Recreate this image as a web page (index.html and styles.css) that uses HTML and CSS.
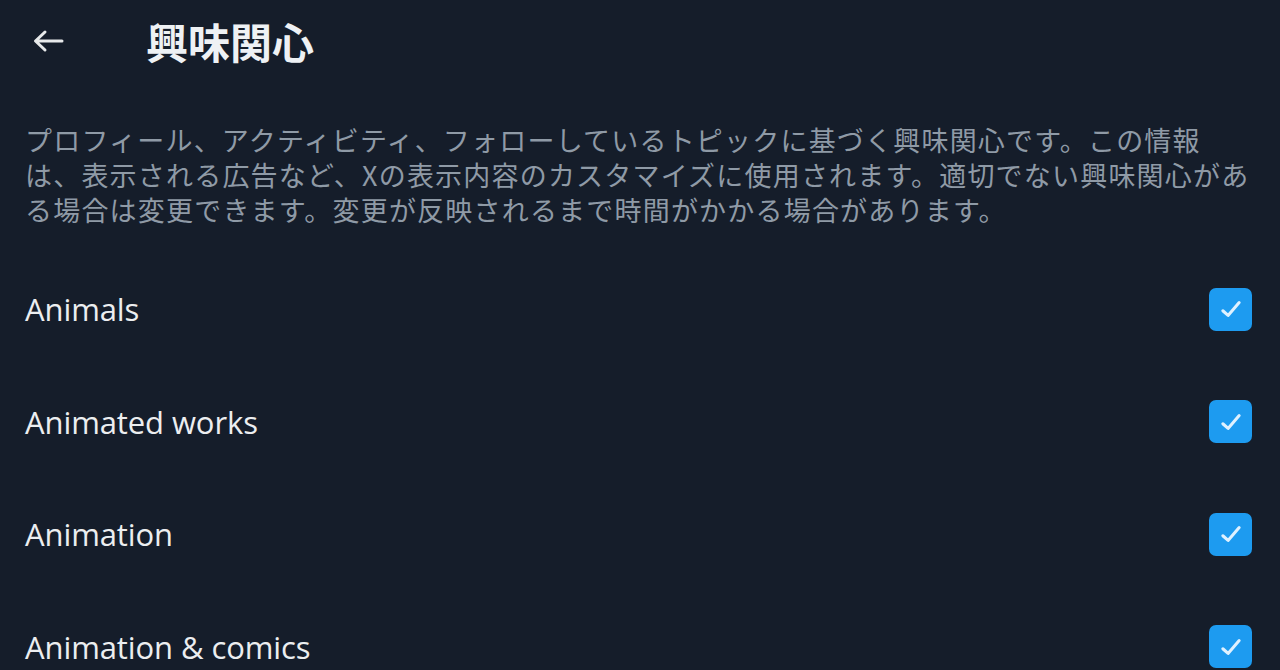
FILE: index.html
```html
<!DOCTYPE html>
<html lang="ja">
<head>
<meta charset="utf-8">
<title>興味関心</title>
<link rel="stylesheet" href="styles.css">
</head>
<body>
<div class="page">
  <header class="header">
    <button class="back" aria-label="戻る">
      <svg viewBox="0 0 32 24" width="32" height="24"><path d="M30 12H4M13 3L3.5 12L13 21" fill="none" stroke="#e7e9ea" stroke-width="3" stroke-linecap="round" stroke-linejoin="round"/></svg>
    </button>
    <h1 class="title">興味関心</h1>
  </header>
  <p class="desc"><span class="line">プロフィール、アクティビティ、フォローしているトピックに基づく興味関心です。この情報</span><span class="line">は、表示される広告など、Xの表示内容のカスタマイズに使用されます。適切でない興味関心があ</span><span class="line">る場合は変更できます。変更が反映されるまで時間がかかる場合があります。</span></p>
  <ul class="list">
    <li class="row"><span class="label">Animals</span><span class="check"><svg viewBox="0 0 24 24" width="28" height="28"><path d="M5 13.5l4.5 4L19 6.5" fill="none" stroke="#dff1ff" stroke-width="2.6" stroke-linecap="round" stroke-linejoin="round"/></svg></span></li>
    <li class="row"><span class="label">Animated works</span><span class="check"><svg viewBox="0 0 24 24" width="28" height="28"><path d="M5 13.5l4.5 4L19 6.5" fill="none" stroke="#dff1ff" stroke-width="2.6" stroke-linecap="round" stroke-linejoin="round"/></svg></span></li>
    <li class="row"><span class="label">Animation</span><span class="check"><svg viewBox="0 0 24 24" width="28" height="28"><path d="M5 13.5l4.5 4L19 6.5" fill="none" stroke="#dff1ff" stroke-width="2.6" stroke-linecap="round" stroke-linejoin="round"/></svg></span></li>
    <li class="row"><span class="label">Animation &amp; comics</span><span class="check"><svg viewBox="0 0 24 24" width="28" height="28"><path d="M5 13.5l4.5 4L19 6.5" fill="none" stroke="#dff1ff" stroke-width="2.6" stroke-linecap="round" stroke-linejoin="round"/></svg></span></li>
  </ul>
</div>
</body>
</html>
```

FILE: styles.css
```css
html, body {
  margin: 0;
  padding: 0;
  background: #151d2a;
}
body {
  font-family: "Open Sans", "Noto Sans CJK JP", sans-serif;
  color: #e7e9ea;
  overflow: hidden;
}
.page {
  width: 1280px;
  height: 670px;
}
.header {
  height: 82px;
  display: flex;
  align-items: center;
}
.back {
  margin-left: 31px;
  width: 34px;
  height: 34px;
  padding: 0;
  border: 0;
  background: transparent;
  display: flex;
  align-items: center;
  justify-content: center;
}
.title {
  margin: 0 0 0 81px;
  font-family: "Noto Sans CJK JP", sans-serif;
  font-size: 42px;
  font-weight: 700;
  line-height: 1;
  color: #eef1f4;
}
.desc {
  margin: 40px 0 0;
  padding: 0 20px 0 25px;
  font-family: "Noto Sans CJK JP", sans-serif;
  font-size: 27px;
  letter-spacing: 1.2px;
  color: #8f9aa6;
  white-space: nowrap;
}
.line {
  display: block;
  height: 35px;
  line-height: 35px;
}
.list {
  list-style: none;
  margin: 26px 0 0;
  padding: 0;
}
.row {
  height: 112.5px;
  display: flex;
  align-items: center;
  justify-content: space-between;
  padding: 0 28px 0 25px;
}
.label {
  font-size: 31px;
  letter-spacing: -0.1px;
  color: #eceef0;
}
.check {
  width: 43px;
  height: 43px;
  border-radius: 7px;
  background: #1d9bf0;
  display: flex;
  align-items: center;
  justify-content: center;
}
```
